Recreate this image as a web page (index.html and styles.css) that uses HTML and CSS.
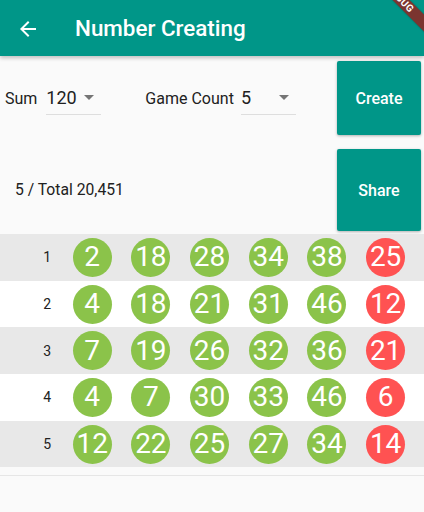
FILE: index.html
```html
<!DOCTYPE html>
<html>
<head>
<meta charset="utf-8">
<link rel="stylesheet" href="styles.css">
</head>
<body>
<div class="app">
  <header class="appbar">
    <svg class="back" viewBox="0 0 24 24" width="24" height="24"><path fill="#fff" d="M20 11H7.83l5.59-5.59L12 4l-8 8 8 8 1.41-1.41L7.83 13H20v-2z"/></svg>
    <div class="title">Number Creating</div>
  </header>
  <div class="banner"><span>DEBUG</span></div>

  <section class="controls">
    <div class="row row1">
      <span class="label sum-label">Sum</span>
      <div class="dropdown"><span class="value">120</span><span class="arrow"></span></div>
      <span class="label gc-label">Game Count</span>
      <div class="dropdown dd2"><span class="value">5</span><span class="arrow"></span></div>
      <button class="btn btn-create">Create</button>
    </div>
    <div class="row row2">
      <span class="total">5 / Total 20,451</span>
      <button class="btn btn-share">Share</button>
    </div>
  </section>

  <section class="list">
    <div class="game odd"><span class="idx">1</span><div class="balls"><span class="ball">2</span><span class="ball">18</span><span class="ball">28</span><span class="ball">34</span><span class="ball">38</span><span class="ball bonus">25</span></div></div>
    <div class="game"><span class="idx">2</span><div class="balls"><span class="ball">4</span><span class="ball">18</span><span class="ball">21</span><span class="ball">31</span><span class="ball">46</span><span class="ball bonus">12</span></div></div>
    <div class="game odd"><span class="idx">3</span><div class="balls"><span class="ball">7</span><span class="ball">19</span><span class="ball">26</span><span class="ball">32</span><span class="ball">36</span><span class="ball bonus">21</span></div></div>
    <div class="game"><span class="idx">4</span><div class="balls"><span class="ball">4</span><span class="ball">7</span><span class="ball">30</span><span class="ball">33</span><span class="ball">46</span><span class="ball bonus">6</span></div></div>
    <div class="game odd"><span class="idx">5</span><div class="balls"><span class="ball">12</span><span class="ball">22</span><span class="ball">25</span><span class="ball">27</span><span class="ball">34</span><span class="ball bonus">14</span></div></div>
  </section>
  <div class="divider"></div>
</div>
</body>
</html>
```

FILE: styles.css
```css
* { box-sizing: border-box; }
html, body {
  margin: 0;
  padding: 0;
  background: #fafafa;
  font-family: Roboto, "Liberation Sans", sans-serif;
  color: #212121;
}
.app {
  position: relative;
  width: 424px;
  height: 512px;
  overflow: hidden;
  background: #fafafa;
}
.appbar {
  height: 56px;
  background: #009688;
  display: flex;
  align-items: center;
  box-shadow: 0 2px 4px rgba(0,0,0,0.24);
  position: relative;
  z-index: 2;
}
.back {
  margin-left: 16px;
  margin-top: 1px;
  flex: none;
}
.title {
  margin-left: 35px;
  color: #fff;
  font-size: 22.4px;
  font-weight: 500;
}
.banner {
  position: absolute;
  z-index: 3;
  left: 340px;
  top: -7px;
  width: 120px;
  height: 12px;
  background: #7b3530;
  transform: rotate(45deg);
  display: flex;
  align-items: center;
  justify-content: center;
  box-shadow: 0 0 2px rgba(0,0,0,0.3);
}
.banner span {
  color: #fff;
  font-size: 10px;
  font-weight: 700;
  line-height: 12px;
  letter-spacing: 0.3px;
}
.controls {
  display: flex;
  flex-direction: column;
}
.row {
  display: flex;
  align-items: center;
}
.row1 { height: 84px; }
.row2 { height: 94px; }
.label { font-size: 16px; }
.sum-label { margin-left: 5px; }
.gc-label { margin-left: 44px; }
.dropdown {
  width: 55px;
  height: 33px;
  margin-left: 9px;
  display: flex;
  align-items: center;
  justify-content: space-between;
  border-bottom: 1px solid #dedede;
}
.dd2 { margin-left: 7px; }
.value {
  font-size: 18px;
  margin-top: -1px;
}
.arrow {
  width: 24px;
  height: 24px;
  position: relative;
  flex: none;
}
.arrow::after {
  content: "";
  position: absolute;
  left: 7px;
  top: 9px;
  border-left: 5px solid transparent;
  border-right: 5px solid transparent;
  border-top: 5px solid #757575;
}
.btn {
  margin-left: auto;
  margin-right: 3px;
  width: 84px;
  border: none;
  border-radius: 2px;
  background: #009688;
  color: #fff;
  font-family: Roboto, "Liberation Sans", sans-serif;
  font-size: 16px;
  font-weight: 500;
  box-shadow: 0 1px 3px rgba(0,0,0,0.3);
  padding: 0;
}
.btn-create { height: 74px; margin-top: 0; }
.btn-share { height: 82px; margin-top: 6px; }
.total {
  margin-left: 15px;
  font-size: 15.7px;
  margin-top: 5px;
}
.list {
  display: flex;
  flex-direction: column;
}
.game {
  height: 46.7px;
  display: flex;
  align-items: center;
  background: #fff;
}
.game.odd { background: #e8e8e8; }
.idx {
  width: 52px;
  text-align: right;
  font-size: 14px;
  padding-right: 1px;
}
.balls {
  display: flex;
  gap: 19.7px;
  margin-left: 20.7px;
}
.ball {
  width: 39px;
  height: 39px;
  border-radius: 50%;
  background: #8bc34a;
  color: #fff;
  font-size: 28px;
  display: flex;
  align-items: center;
  justify-content: center;
  line-height: 1;
}
.ball.bonus { background: #ff5252; }
.divider {
  margin-top: 7.5px;
  height: 1px;
  background: #e6e6e6;
}
```
